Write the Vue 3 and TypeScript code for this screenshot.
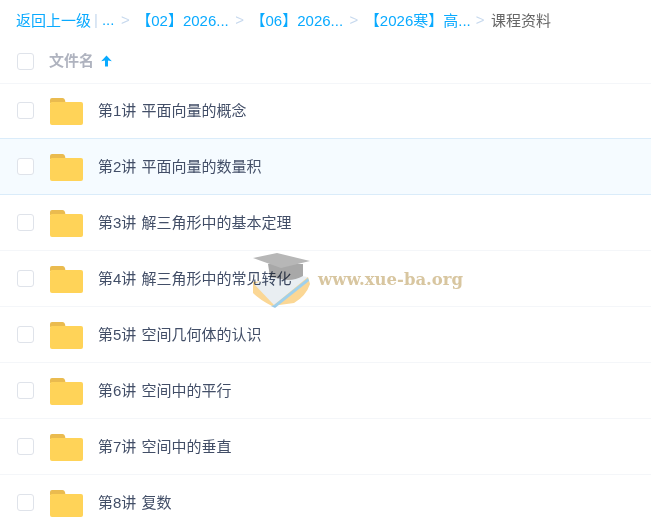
<template>
  <div class="page">
    <div class="crumbs">
      <a class="crumbs__back">返回上一级</a>
      <span class="crumbs__bar">|</span>
      <a class="crumbs__dots">...</a>
      <template v-for="c in crumbs" :key="c">
        <span class="crumbs__sep">&gt;</span>
        <a class="crumbs__link">{{ c }}</a>
      </template>
      <span class="crumbs__sep crumbs__sep--last">&gt;</span>
      <span class="crumbs__current">课程资料</span>
    </div>

    <div class="head">
      <span class="check"></span>
      <span class="head__label">文件名</span>
      <svg class="head__arrow" width="11" height="12" viewBox="0 0 11 12">
        <path d="M5.5 0.5 L10.8 6.2 L7 5.4 L7 11.5 L4 11.5 L4 5.4 L0.2 6.2 Z" fill="#09aaff" />
      </svg>
    </div>

    <div
      v-for="(name, i) in files"
      :key="name"
      class="row"
      :class="{ 'row--active': i === 1 }"
    >
      <span class="check"></span>
      <svg class="folder" width="33" height="27" viewBox="0 0 33 27">
        <path d="M0 2 A2 2 0 0 1 2 0 H12 A3 3 0 0 1 15 2 L15.5 5 H0 Z" fill="#eabb4f" />
        <rect x="0" y="4" width="33" height="23" rx="2" fill="#ffd358" />
      </svg>
      <span class="row__name">{{ name }}</span>
    </div>

    <div class="mark">
      <svg class="mark__logo" width="60" height="60" viewBox="0 0 60 60">
        <path d="M3 32 L3 43 Q10 50 22 56 L44 53 Q56 46 60 34 L58 27 Z" fill="#fbd795" />
        <path d="M4 34 L30 23 L58 27 L24 55 Z" fill="#e9eef2" />
        <path d="M24 55 L58 28 L59 31 L25 58 L21 56 Z" fill="#9fd0ec" />
        <path d="M18 14 L53 14 L53 26 Q42 32 31 29 L20 27 Z" fill="#a8a8a8" />
        <path d="M3 8 L27 3 L60 11 L31 18 Z" fill="#b7b7b7" />
      </svg>
      <span class="mark__text">www.xue-ba.org</span>
    </div>
  </div>
</template>

<script setup lang="ts">
const crumbs: string[] = ['【02】2026...', '【06】2026...', '【2026寒】高...']

const files: string[] = [
  '第1讲 平面向量的概念',
  '第2讲 平面向量的数量积',
  '第3讲 解三角形中的基本定理',
  '第4讲 解三角形中的常见转化',
  '第5讲 空间几何体的认识',
  '第6讲 空间中的平行',
  '第7讲 空间中的垂直',
  '第8讲 复数',
]
</script>

<style>
html,
body {
  overflow: hidden;
  background: #fff;
}
</style>

<style scoped>
.page {
  position: relative;
  width: 651px;
  height: 529px;
  overflow: hidden;
  font-family: "Liberation Sans", "Noto Sans CJK SC", sans-serif;
  font-size: 15px;
  color: #424e67;
}

.crumbs {
  display: flex;
  align-items: center;
  height: 39px;
  padding-left: 16px;
  white-space: nowrap;
}

.crumbs__back,
.crumbs__link,
.crumbs__dots {
  color: #09aaff;
}

.crumbs__bar {
  margin: 0 4px 0 3px;
  color: #c7d9ee;
}

.crumbs__sep {
  margin: 0 6.5px;
  color: #c7d9ee;
}

.crumbs__sep--last {
  margin-left: 5px;
}

.crumbs__current {
  color: #666;
}

.head {
  display: flex;
  align-items: center;
  box-sizing: border-box;
  height: 45px;
  margin-bottom: -1px;
  padding-left: 17px;
  border-bottom: 1px solid #f4f6f9;
}

.head__label {
  margin-left: 15px;
  margin-bottom: 4px;
  font-weight: 700;
  color: #afb3bf;
}

.head__arrow {
  margin-left: 7px;
  margin-bottom: 1px;
}

.check {
  flex: none;
  box-sizing: border-box;
  width: 17px;
  height: 17px;
  border: 1.5px solid #dfe3ea;
  border-radius: 3px;
  background: #fff;
}

.row {
  display: flex;
  align-items: center;
  box-sizing: border-box;
  height: 56px;
  padding-left: 17px;
  border-bottom: 1px solid #f4f6f9;
}

.row--active {
  margin-top: -1px;
  height: 57px;
  background: #f5fbff;
  border-top: 1px solid #daecfa;
  border-bottom: 1px solid #daecfa;
}

.folder {
  flex: none;
  margin-left: 16px;
  margin-top: 2px;
}

.row__name {
  margin-left: 15px;
  margin-bottom: 2px;
  word-spacing: 1px;
}

.mark {
  position: absolute;
  left: 250px;
  top: 250px;
  display: flex;
  align-items: center;
  mix-blend-mode: multiply;
  filter: blur(0.4px);
  pointer-events: none;
}

.mark__logo {
  flex: none;
}

.mark__text {
  margin-left: 8px;
  margin-bottom: 2px;
  font-family: "DejaVu Serif", serif;
  font-size: 16.5px;
  font-weight: 700;
  color: #d8c6a0;
}
</style>
